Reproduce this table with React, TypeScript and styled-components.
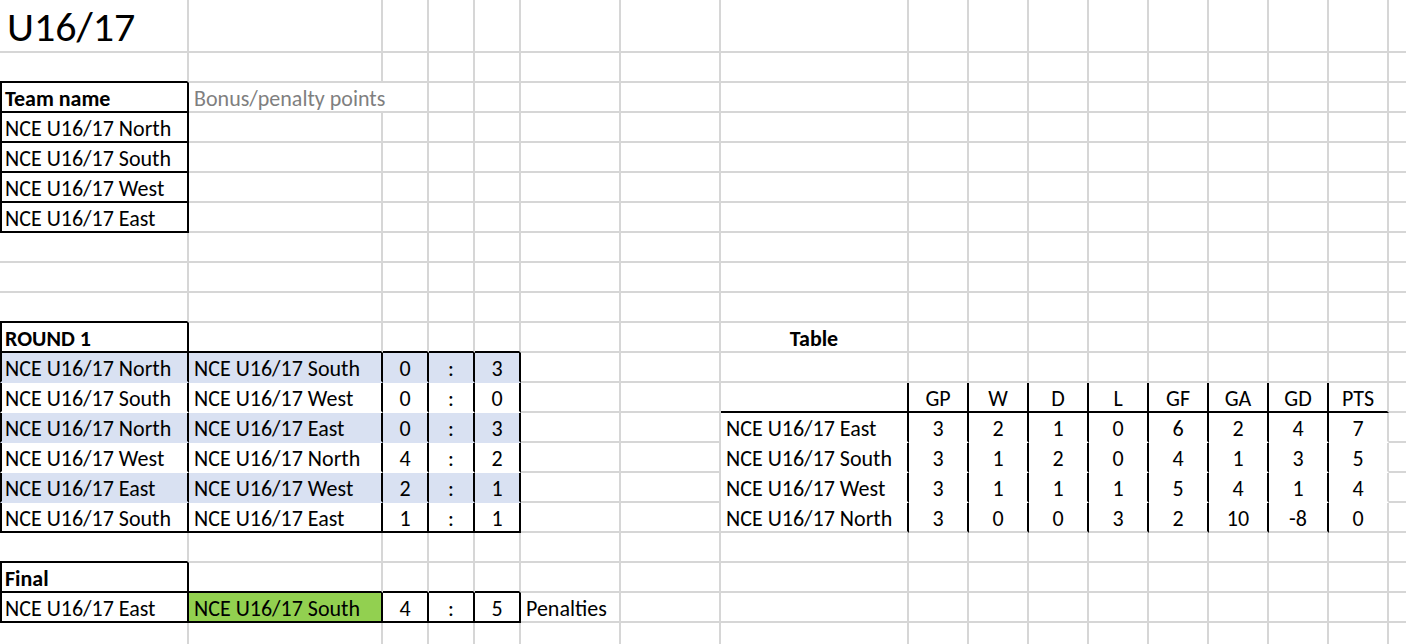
import React from "react";
import styled, { createGlobalStyle } from "styled-components";

const GRID = "#d6d6d6";
const INK = "#000000";
const BLUE = "#d9e1f2";
const GREEN = "#92d050";
const FONT = `Calibri, Carlito, Lato, "Liberation Sans", sans-serif`;

const Global = createGlobalStyle`
  html, body { margin: 0; padding: 0; background: #ffffff; }
  body { width: 1406px; height: 644px; overflow: hidden; font-family: ${FONT}; }
`;

type Line = "grid" | "ink" | "none";

interface Spec {
  text?: string;
  r?: Line;
  b?: Line;
  l?: boolean;
  fill?: string;
  center?: boolean;
  bold?: boolean;
  muted?: boolean;
  span?: number;
  title?: boolean;
}

const COLS = 17;

const Sheet = styled.div`
  display: grid;
  grid-template-columns: 189px 194px 46px 46px 46px 100px 100px 188px repeat(9, 60px);
  grid-template-rows: 53px repeat(20, 30px);
  width: 1406px;
  height: 644px;
  overflow: hidden;
`;

const lineColor = (l: Line | undefined, fill?: string) =>
  l === "ink" ? INK : l === "none" ? fill ?? "#ffffff" : GRID;

const Cell = styled.div<{
  $r?: Line;
  $b?: Line;
  $l?: boolean;
  $fill?: string;
  $center?: boolean;
  $bold?: boolean;
  $muted?: boolean;
  $span?: number;
  $title?: boolean;
}>`
  box-sizing: border-box;
  display: flex;
  align-items: flex-end;
  justify-content: ${(p) => (p.$center ? "center" : "flex-start")};
  grid-column: span ${(p) => p.$span ?? 1};
  padding: 0 0 ${(p) => (p.$title ? 3 : 1)}px
    ${(p) => (p.$center ? 0 : p.$title ? 7 : p.$l ? 3 : 5)}px;
  border-right: 2px solid ${(p) => lineColor(p.$r, p.$fill)};
  border-bottom: 2px solid ${(p) => lineColor(p.$b, p.$fill)};
  border-left: ${(p) => (p.$l ? `2px solid ${INK}` : "none")};
  background: ${(p) => p.$fill ?? "transparent"};
  font-size: ${(p) => (p.$title ? 42 : 22)}px;
  line-height: 1;
  font-weight: ${(p) => (p.$bold ? 700 : 400)};
  color: ${(p) => (p.$muted ? "#7f7f7f" : "#000000")};
  white-space: nowrap;
  min-width: 0;
`;

type RowSpec = Record<number, Spec>;

const A = 0, B = 1, C = 2, D = 3, E = 4, F = 5, H = 7;

const matches: [string, string, string, string][] = [
  ["NCE U16/17 North", "NCE U16/17 South", "0", "3"],
  ["NCE U16/17 South", "NCE U16/17 West", "0", "0"],
  ["NCE U16/17 North", "NCE U16/17 East", "0", "3"],
  ["NCE U16/17 West", "NCE U16/17 North", "4", "2"],
  ["NCE U16/17 East", "NCE U16/17 West", "2", "1"],
  ["NCE U16/17 South", "NCE U16/17 East", "1", "1"],
];

const standings: [string, number[]][] = [
  ["NCE U16/17 East", [3, 2, 1, 0, 6, 2, 4, 7]],
  ["NCE U16/17 South", [3, 1, 2, 0, 4, 1, 3, 5]],
  ["NCE U16/17 West", [3, 1, 1, 1, 5, 4, 1, 4]],
  ["NCE U16/17 North", [3, 0, 0, 3, 2, 10, -8, 0]],
];

const heads = ["GP", "W", "D", "L", "GF", "GA", "GD", "PTS"];
const teams = ["NCE U16/17 North", "NCE U16/17 South", "NCE U16/17 West", "NCE U16/17 East"];

function buildRows(): RowSpec[] {
  const rows: RowSpec[] = [];
  rows.push({ [A]: { text: "U16/17", title: true } });
  rows.push({ [A]: { b: "ink" } });
  rows.push({
    [A]: { text: "Team name", bold: true, l: true, r: "ink", b: "ink" },
    [B]: { text: "Bonus/penalty points", muted: true, span: 2 },
  });
  teams.forEach((t) => rows.push({ [A]: { text: t, l: true, r: "ink", b: "ink" } }));
  rows.push({});
  rows.push({});
  rows.push({ [A]: { b: "ink" } });
  rows.push({
    [A]: { text: "ROUND 1", bold: true, l: true, r: "ink", b: "ink" },
    [B]: { b: "ink" },
    [C]: { b: "ink" },
    [D]: { b: "ink" },
    [E]: { b: "ink" },
    [H]: { text: "Table", bold: true, center: true },
  });
  matches.forEach((m, i) => {
    const fill = i % 2 === 0 ? BLUE : undefined;
    const b: Line = i === matches.length - 1 ? "ink" : "none";
    const row: RowSpec = {
      [A]: { text: m[0], l: true, r: "ink", b, fill },
      [B]: { text: m[1], r: "ink", b, fill },
      [C]: { text: m[2], r: "ink", b, fill, center: true },
      [D]: { text: ":", r: "ink", b, fill, center: true },
      [E]: { text: m[3], r: "ink", b, fill, center: true },
    };
    if (i === 1) {
      row[H] = { r: "ink", b: "ink" };
      heads.forEach((h, k) => {
        row[H + 1 + k] = { text: h, center: true, r: k === heads.length - 1 ? "grid" : "ink", b: "ink" };
      });
    }
    if (i >= 2) {
      const s = standings[i - 2];
      const last = i === matches.length - 1;
      const tb: Line = last ? "grid" : "none";
      row[H] = { text: s[0], r: "ink", b: tb };
      s[1].forEach((v, k) => {
        row[H + 1 + k] = { text: String(v), center: true, r: k === 7 ? "grid" : "ink", b: tb };
      });
    }
    rows.push(row);
  });
  rows.push({ [A]: { b: "ink" } });
  rows.push({
    [A]: { text: "Final", bold: true, l: true, r: "ink", b: "ink" },
    [B]: { b: "ink" },
    [C]: { b: "ink" },
    [D]: { b: "ink" },
    [E]: { b: "ink" },
  });
  rows.push({
    [A]: { text: "NCE U16/17 East", l: true, r: "ink", b: "ink" },
    [B]: { text: "NCE U16/17 South", r: "ink", b: "ink", fill: GREEN },
    [C]: { text: "4", r: "ink", b: "ink", center: true },
    [D]: { text: ":", r: "ink", b: "ink", center: true },
    [E]: { text: "5", r: "ink", b: "ink", center: true },
    [F]: { text: "Penalties" },
  });
  rows.push({});
  return rows;
}

const ROWS = buildRows();

export default function App() {
  const cells: React.ReactNode[] = [];
  ROWS.forEach((row, ri) => {
    let c = 0;
    while (c < COLS) {
      const s = row[c] ?? {};
      cells.push(
        <Cell
          key={`${ri}-${c}`}
          $r={s.r}
          $b={s.b}
          $l={s.l}
          $fill={s.fill}
          $center={s.center}
          $bold={s.bold}
          $muted={s.muted}
          $span={s.span}
          $title={s.title}
        >
          {s.text}
        </Cell>
      );
      c += s.span ?? 1;
    }
  });
  return (
    <>
      <Global />
      <Sheet>{cells}</Sheet>
    </>
  );
}
